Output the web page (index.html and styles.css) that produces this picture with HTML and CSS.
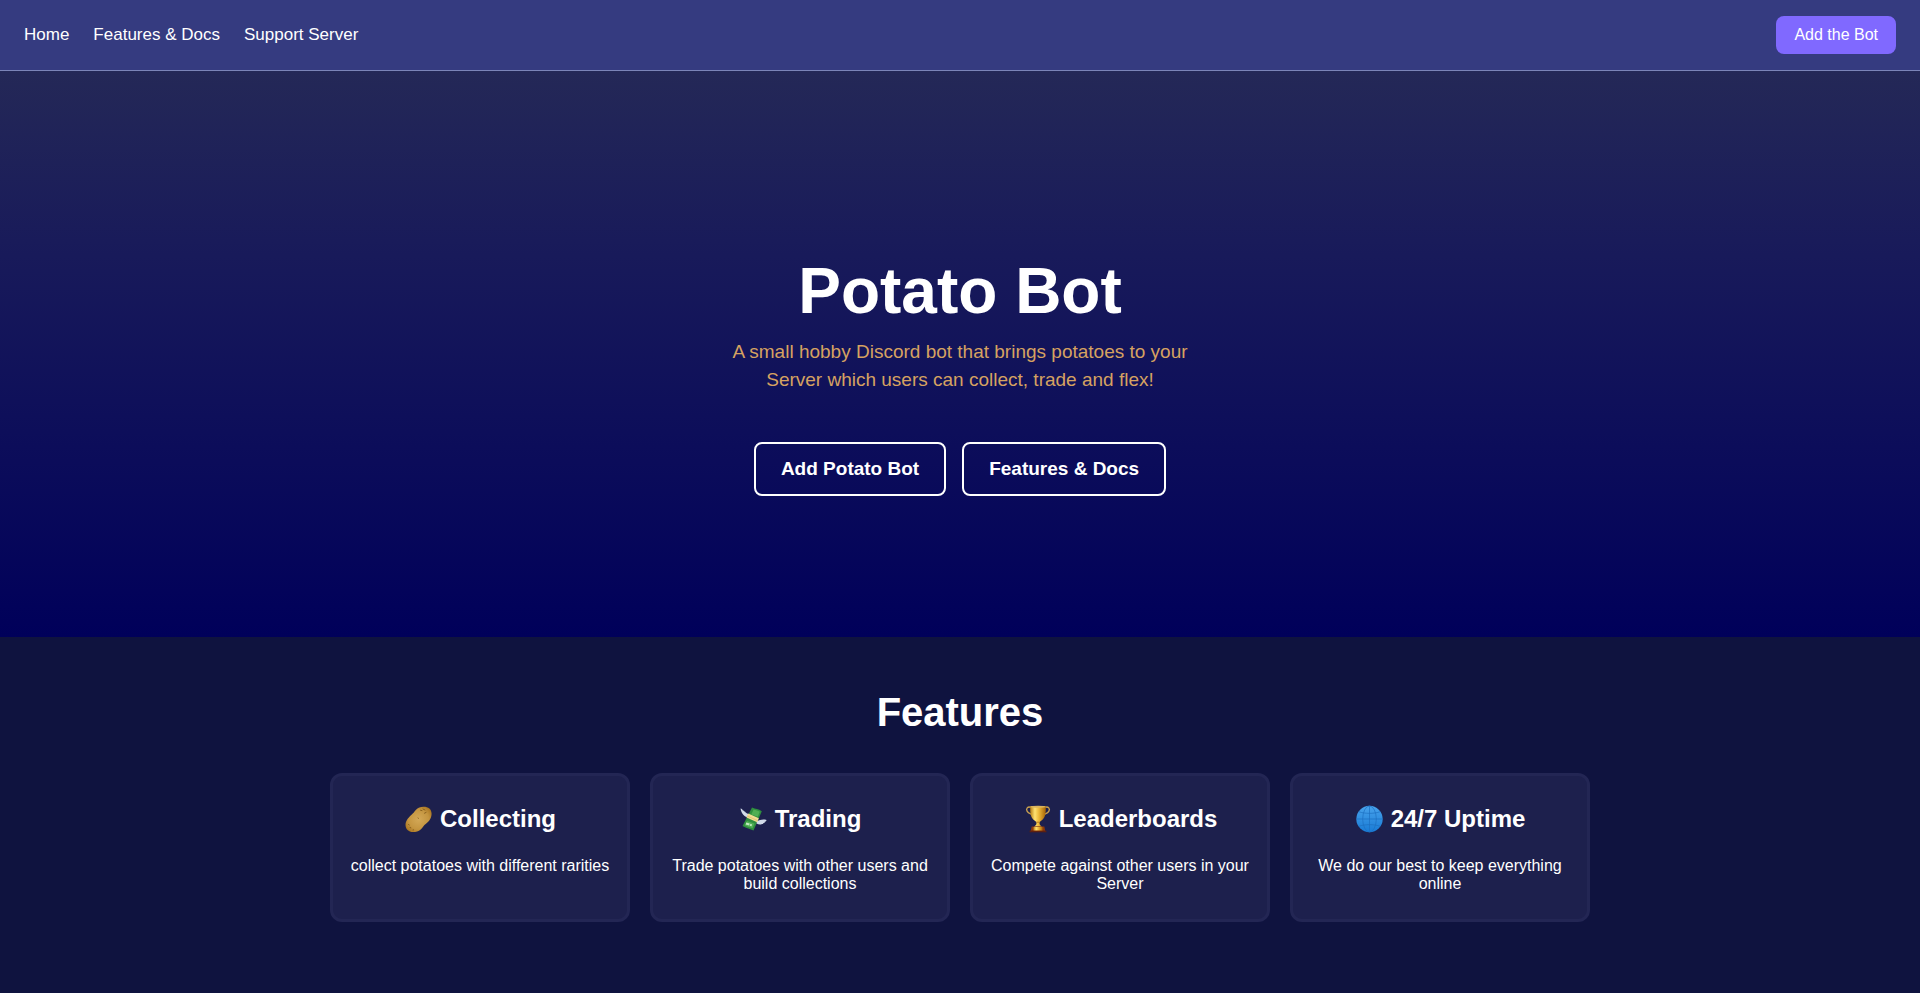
FILE: index.html
```html
<!DOCTYPE html>
<html lang="en">
<head>
<meta charset="utf-8">
<title>Potato Bot</title>
<link rel="stylesheet" href="styles.css">
</head>
<body>
<header class="navbar">
  <nav class="nav-links">
    <a href="#">Home</a>
    <a href="#features">Features &amp; Docs</a>
    <a href="#">Support Server</a>
  </nav>
  <a class="invite" href="#">Add the Bot</a>
</header>
<main>
  <section class="hero">
    <h1>Potato Bot</h1>
    <p class="tagline">A small hobby Discord bot that brings potatoes to your Server which users can collect, trade and flex!</p>
    <div class="actions">
      <a class="action" href="#">Add Potato Bot</a>
      <a class="action" href="#features">Features &amp; Docs</a>
    </div>
  </section>
  <section class="features" id="features">
    <h2>Features</h2>
    <div class="cards">
      <article class="card">
        <h3>
          <svg class="icon" viewBox="0 0 28 28" aria-hidden="true">
            <defs><radialGradient id="skin" cx=".5" cy=".5" r=".6"><stop offset="0" stop-color="#d3a857"/><stop offset=".65" stop-color="#c49540"/><stop offset="1" stop-color="#a8731f"/></radialGradient></defs>
            <path d="M9 8.300C11.500 6 12.600 1.700 19.500 1.700c5 0 8.100 2.600 8.100 7 0 4.300-2.500 7.800-5.600 10-2.500 1.800-3 3.700-5.300 5.700-2.200 1.900-4.600 2.700-7.700 2.700-4.600 0-7.500-3-7.500-7.300C1.500 15.500 5 12 9 8.300z" fill="url(#skin)"/>
            <path d="M16.500 5.200l1.500.4M19 4l2 1M20.500 8.200l1.600-.8M4.500 19.500l.8.500M6 22.500l.8.300M14 13l.5.300M9 25l.6-.1" stroke="#7a5418" stroke-width=".8" stroke-linecap="round" fill="none"/>
          </svg>
          Collecting
        </h3>
        <p>collect potatoes with different rarities</p>
      </article>
      <article class="card">
        <h3>
          <svg class="icon" viewBox="0 0 28 28" aria-hidden="true">
            <path d="M13 2.600c3.500 1.700 6.500 1.300 9.800 3.600L14.500 25.600c-3.500-2.200-7-2.200-11-4.700z" fill="#2f8f3f"/>
            <path d="M14.600 4.600c2.400 1 4.400.9 6.200 2.200l-2 4.900-6.500-2.200zM8 16l7.500 2.400-2 4.900c-2.800-1.400-5-1.500-7.600-2.900z" fill="#4fae53"/>
            <path d="M7.300 17.500l3.400 1-.5 2-3.600-.9zM11.400 18.800l1.700.6-.6 1.900-1.700-.5z" fill="#c4e8c2"/>
            <path d="M9.400 12.200c-3.200.1-7-2.900-7.900-8.700 1.500.2 2 1 2.600 2.200.3-.4.800-.4 1.200.8.500-.3 1 0 1.300 1 .6 0 1.200 1.200 3.700 1.700zM18 16c2.900-.5 4.900-2.200 9.600-1-.4 1.400-1 1.700-1.800 1.700.1.900-.5 1.300-1.400 1.200 0 1-.8 1.200-1.600 1-.5 1.100-3.400.8-5.300-.4z" fill="#d2dbe9"/>
            <path d="M9.200 8.500l10.600 4.800-1.600 4L7.500 12.600z" fill="#f1dc91"/>
            <path d="M8.200 11l10.600 4.700" stroke="#d8b96b" stroke-width=".7"/>
          </svg>
          Trading
        </h3>
        <p>Trade potatoes with other users and build collections</p>
      </article>
      <article class="card">
        <h3>
          <svg class="icon" viewBox="0 0 28 28" aria-hidden="true">
            <defs>
              <linearGradient id="gold"><stop offset="0" stop-color="#b67c14"/><stop offset=".3" stop-color="#ffe272"/><stop offset=".55" stop-color="#edb93a"/><stop offset="1" stop-color="#a56305"/></linearGradient>
            </defs>
            <path d="M8.500 2.600C4.500.9 2.600 3.800 4.200 6.300 5.500 8.500 8 8.700 10.500 10.500M21.500 2.600c4-1.700 5.900 1.200 4.300 3.700C24.500 8.500 22 8.700 19.500 10.500" fill="none" stroke="#c9a050" stroke-width="1.400"/>
            <path d="M7.300 1.200h15.400c.5 7-.7 12.100-4.200 14.200-1.500.9-2 1.500-2 2.700 0 1.600.9 2.800 2.700 3.700h-8.400c1.800-.9 2.700-2.100 2.700-3.700 0-1.200-.5-1.800-2-2.700C8 13.300 6.800 8.200 7.300 1.200z" fill="url(#gold)"/>
            <ellipse cx="15" cy="1.700" rx="7.700" ry="1" fill="#dcb45c"/>
            <path d="M8.700 21.600h12.600l1.200 5.500h-15z" fill="#8f3a0c"/>
            <path d="M6.600 25.600h16.800v1.700H6.600z" fill="#5e2010"/>
            <path d="M10.400 22h9.200v3.400h-9.200z" fill="url(#gold)"/>
            <path d="M13.400 17.200h3.200" stroke="#a86d10" stroke-width=".8"/>
          </svg>
          Leaderboards
        </h3>
        <p>Compete against other users in your Server</p>
      </article>
      <article class="card">
        <h3>
          <svg class="icon" viewBox="0 0 28 28" aria-hidden="true">
            <defs><linearGradient id="sea" x1="0" y1="0" x2="0" y2="1"><stop offset="0" stop-color="#48a2ec"/><stop offset="1" stop-color="#187bd5"/></linearGradient></defs>
            <circle cx="14.500" cy="14" r="13.200" fill="url(#sea)"/>
            <g fill="none" stroke="#1c70c2" stroke-width=".7">
              <path d="M14.500 1v26M1.500 14h26M3.800 6.700c6 2.200 15.400 2.200 21.400 0M3.800 21.300c6-2.200 15.400-2.200 21.400 0"/>
              <ellipse cx="14.500" cy="14" rx="6.800" ry="13"/>
            </g>
          </svg>
          24/7 Uptime
        </h3>
        <p>We do our best to keep everything online</p>
      </article>
    </div>
  </section>
</main>
</body>
</html>
```
FILE: styles.css
```css
* { box-sizing: border-box; }

body {
  margin: 0;
  min-height: 100vh;
  background: #0f133f;
  color: #fff;
  font-family: "Liberation Sans", Arial, sans-serif;
  font-size: 16px;
}

a { color: inherit; text-decoration: none; }

.navbar {
  display: flex;
  align-items: center;
  justify-content: space-between;
  padding: 16px 24px;
  background: #353b80;
  border-bottom: 1px solid #7b84b8;
}

.nav-links { display: flex; gap: 24px; font-size: 17px; }

.invite {
  padding: 10px 18px;
  border-radius: 8px;
  background: #8069ff;
  line-height: 18px;
}

.hero {
  display: flex;
  flex-direction: column;
  align-items: center;
  justify-content: center;
  min-height: 57vh;
  padding: 90px 24px 48px;
  background: linear-gradient(#242857, #191b5a 30%, #00005a);
  text-align: center;
}

.hero h1 { margin: 0 0 10px; font-size: 64px; line-height: 74px; }

.tagline {
  max-width: 480px;
  margin: 0 0 48px;
  color: #d6a261;
  font-size: 19px;
  line-height: 28px;
}

.actions { display: flex; gap: 16px; }

.action {
  padding: 14px 25px;
  border: 2px solid #fff;
  border-radius: 8px;
  font-size: 19px;
  font-weight: bold;
  line-height: 22px;
}

.features { padding: 51px 24px 64px; text-align: center; }

.features h2 { margin: 0 0 37px; font-size: 40px; line-height: 48px; }

.cards {
  display: grid;
  grid-template-columns: repeat(4, 1fr);
  gap: 20px;
  max-width: 1260px;
  margin: 0 auto;
}

.card {
  padding: 29px 16px 26px;
  border: 3px solid #232654;
  border-radius: 12px;
  background: #1d204d;
}

.card h3 {
  display: flex;
  align-items: center;
  justify-content: center;
  gap: 8px;
  margin: 0 0 24px;
  font-size: 24px;
  line-height: 28px;
}

.card p { margin: 0; line-height: 18px; }

.icon { width: 28px; height: 28px; }
```
